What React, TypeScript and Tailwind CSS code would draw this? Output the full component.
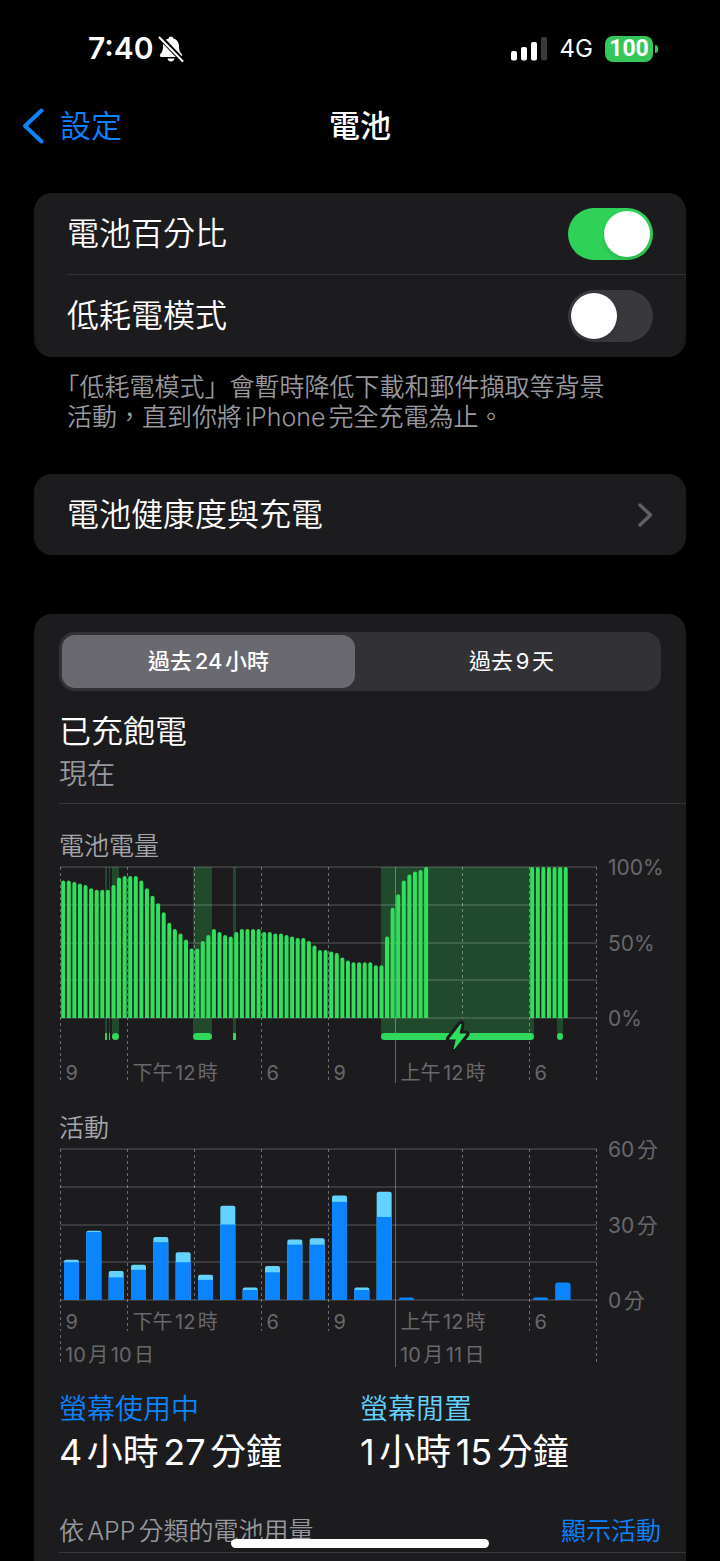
import React, { useState } from 'react';

const battery: (number | null)[] = [
  91, 91, 90, 89, 88, 86, 85, 85, 85, 88, 93, 94, 94, 94, 91, 86, 81, 76, 70, 63, 59, 56, 52, 46, 46, 51, 55, 59, 57,
  55, 54, 57, 59, 59, 59, 59, 57, 57, 56, 56, 55, 54, 53, 53, 51, 48, 45, 45, 44, 43, 40, 38, 37, 37, 37, 37, 35, 35,
  54, 73, 82, 91, 95, 97, 98, 100,
  ...Array(18).fill(null),
  100, 100, 100, 100, 100, 100, 100,
];

// [start, end] of each charging period, in chart units
const charging = [
  [46, 48],
  [50, 51],
  [53, 60],
  [134, 153],
  [174, 177],
  [322, 475],
  [498, 504],
];

// [hour slot, screen on minutes, screen idle minutes]
const activity = [
  [0, 15, 1],
  [1, 27, 0.5],
  [2, 9, 2.5],
  [3, 12, 2],
  [4, 23, 2],
  [5, 15, 4],
  [6, 8, 2],
  [7, 30, 7.5],
  [8, 4, 1],
  [9, 11, 2.5],
  [10, 22, 2],
  [11, 22, 2.5],
  [12, 39, 2.5],
  [13, 4, 1],
  [14, 33, 10],
  [15, 1, 0],
  [21, 1, 0],
  [22, 7, 0],
];

const hours = ['9', '下午12時', '', '6', '9', '上午12時', '', '6', ''];

const TOP = 8;
const PLOT = 151;
const STEP = 67;

function Grid({ labels, labelY, lineEnd }: { labels: string[]; labelY: number; lineEnd: number }) {
  return (
    <g>
      {[0, 1, 2, 3, 4].map((i) => {
        const y = TOP + Math.round((PLOT * i) / 4);
        return <line key={i} x1={1} x2={538} y1={y} y2={y} stroke="#ffffff" strokeOpacity={0.27} strokeWidth={1.2} />;
      })}
      {hours.map((hour, i) => {
        const x = 1.5 + STEP * i;
        const end = hour || i === 8 ? lineEnd : TOP + PLOT;
        return (
          <g key={i}>
            {i === 5 ? (
              <line x1={x} x2={x} y1={TOP} y2={lineEnd} stroke="#ffffff" strokeOpacity={0.32} />
            ) : (
              <line x1={x} x2={x} y1={TOP} y2={end} stroke="#ffffff" strokeOpacity={0.36} strokeDasharray="3 3" />
            )}
            <text x={x + 5} y={labelY} fontSize={20} fill="#68686d">
              {hour}
            </text>
          </g>
        );
      })}
      {labels.map((label, i) => (
        <text key={label} x={549} y={TOP + (PLOT * i) / 2 + 8} fontSize={21} fill="#68686d">
          {label}
        </text>
      ))}
    </g>
  );
}

function BatteryChart() {
  return (
    <svg viewBox="0 0 602 224" className="block w-full overflow-visible font-normal" role="img" aria-label="電池電量">
      {charging.map(([start, end]) => (
        <rect key={start} x={start} y={TOP} width={end - start} height={170} fill="#214a2c" />
      ))}
      <Grid labels={['100%', '50%', '0%']} labelY={221} lineEnd={224} />
      {battery.map((level, i) => {
        if (level === null) return null;
        const height = (PLOT * level) / 100;
        const x = 2.2 + (STEP / 12) * i;
        const y = TOP + PLOT - height;
        return <path key={i} d={`M${x} ${y + height}V${y + 2}q0-2 2-2t2 2V${y + height}z`} fill="#30e05c" />;
      })}
      {charging.map(([start, end]) => (
        <rect key={start} x={start} y={174} width={end - start} height={7} rx={end - start > 4 ? 3.5 : 0.5} fill="#30d95b" />
      ))}
      <path d="M402 165L390.500 180h7L395 190L407 175h-7z" fill="none" stroke="#1c1c1e" strokeWidth={7} strokeLinejoin="round" />
      <path d="M402 165L390.500 180h7L395 190L407 175h-7z" fill="#30e05c" stroke="#30e05c" strokeLinejoin="round" />
    </svg>
  );
}

function ActivityChart() {
  const scale = PLOT / 60;
  return (
    <svg viewBox="0 0 602 226" className="block w-full overflow-visible font-normal" role="img" aria-label="活動">
      <Grid labels={['60分', '30分', '0分']} labelY={188} lineEnd={190} />
      {[0, 8].map((i) => (
        <line key={i} x1={1.5 + STEP * i} x2={1.5 + STEP * i} y1={194} y2={224} stroke="#ffffff" strokeOpacity={0.36} strokeDasharray="3 3" />
      ))}
      <line x1={336.5} x2={336.5} y1={190} y2={226} stroke="#ffffff" strokeOpacity={0.32} />
      <text x={6} y={221} fontSize={20} fill="#68686d">10月10日</text>
      <text x={341} y={221} fontSize={20} fill="#68686d">10月11日</text>
      {activity.map(([slot, on, idle]) => {
        const x = 5 + (STEP / 3) * slot;
        const base = TOP + PLOT;
        const onTop = base - on * scale;
        const top = onTop - idle * scale;
        const r = Math.min(2, base - top);
        return (
          <g key={slot}>
            <path d={`M${x} ${base}V${top + r}q0-${r} ${r}-${r}h${15 - 2 * r}q${r} 0 ${r} ${r}V${base}z`} fill={idle ? '#64d2ff' : '#0a84ff'} />
            <rect x={x} y={idle ? onTop : top + r} width={15} height={base - (idle ? onTop : top + r)} fill="#0a84ff" />
          </g>
        );
      })}
    </svg>
  );
}

function StatusBar() {
  return (
    <div className="flex h-[98px] items-center justify-between pr-[62px] pl-[88px]">
      <div className="flex items-center gap-1">
        <span className="text-[30px] font-semibold">7:40</span>
        <svg viewBox="0 0 26 26" className="size-[26px]" aria-label="靜音">
          <path d="M13 0.500c-1.300 0-2.200.8-2.400 2C6.800 3.500 5 6.500 5 10.500c0 4-.8 5.600-2.400 7.300C1.300 19.200 1.700 21 3.500 21h19c1.800 0 2.200-1.800.9-3.200C21.800 16.100 21 14.500 21 10.500c0-4-1.800-7-5.600-8-.2-1.200-1.100-2-2.400-2z" fill="#fff" />
          <path d="M9.500 22.500h7c-.4 1.800-1.700 3-3.500 3s-3.100-1.200-3.500-3z" fill="#fff" />
          <path d="M2 1L25 25" stroke="#000" strokeWidth="5" />
          <path d="M1.500 1.500L24.500 25" stroke="#fff" strokeWidth="2" strokeLinecap="round" />
        </svg>
      </div>
      <div className="flex items-center gap-3">
        <svg viewBox="0 0 37 24" className="h-6 w-[37px]" aria-label="訊號">
          <rect x="0" y="14" width="6" height="9.500" rx="2" fill="#fff" />
          <rect x="10" y="10" width="6" height="13.500" rx="2" fill="#fff" />
          <rect x="20" y="5" width="6" height="18.500" rx="2" fill="#fff" />
          <rect x="30" y="0" width="6" height="23.500" rx="2" fill="#3a3a3c" />
        </svg>
        <span className="text-[24px] font-normal">4G</span>
        <div className="flex items-center gap-0.5">
          <span className="flex h-[26px] w-[48px] items-center justify-center rounded-lg bg-[#34c759] font-[Roboto,sans-serif] text-[23px] font-bold">
            100
          </span>
          <span className="h-2 w-[3px] rounded-r-full bg-[#34c759]" />
        </div>
      </div>
    </div>
  );
}

function ToggleRow({ label, defaultChecked = false }: { label: string; defaultChecked?: boolean }) {
  return (
    <label className="flex h-[82px] items-center justify-between pr-[33px] text-[32px]">
      {label}
      <input type="checkbox" role="switch" defaultChecked={defaultChecked} className="peer sr-only" />
      <span className="flex h-[52px] w-[85px] items-center rounded-full bg-[#39393d] p-[3px] peer-checked:justify-end peer-checked:bg-[#30d158]">
        <span className="size-[46px] rounded-full bg-white shadow-md" />
      </span>
    </label>
  );
}

export default function App() {
  const [range, setRange] = useState(0);

  return (
    <div
      lang="zh-Hant"
      className="min-h-screen overflow-hidden bg-black font-['Inter','Noto_Sans_CJK_TC',sans-serif] leading-tight font-[350] text-white [text-autospace:normal]"
    >
      <StatusBar />

      <header className="grid h-14 grid-cols-3 items-center px-[22px] text-[31px]">
        <a href="#settings" className="flex items-center gap-4 text-[#0a84ff]">
          <svg viewBox="0 0 22 36" className="h-9 w-[22px]" fill="none" aria-hidden="true">
            <path d="M19.500 2.500L3 18l16.500 15.500" stroke="currentColor" strokeWidth="4" strokeLinecap="round" strokeLinejoin="round" />
          </svg>
          設定
        </a>
        <h1 className="text-center font-medium">電池</h1>
      </header>

      <main className="px-[34px] pt-[39px]">
        <section className="divide-y divide-[#323234] rounded-[18px] bg-[#1c1c1e] pl-[33px]">
          <ToggleRow label="電池百分比" defaultChecked />
          <ToggleRow label="低耗電模式" />
        </section>
        <p className="mt-[15px] px-[33px] text-[25px] leading-[30px] text-[#98989f]">
          <span className="[font-feature-settings:'halt']">「</span>低耗電模式」會暫時降低下載和郵件擷取等背景
          <br />
          活動，直到你將iPhone完全充電為止。
        </p>

        <a href="#health" className="mt-[42px] flex h-[81px] items-center justify-between rounded-[18px] bg-[#1c1c1e] px-[33px] text-[32px]">
          電池健康度與充電
          <svg viewBox="0 0 16 24" className="h-6 w-4" fill="none" aria-hidden="true">
            <path d="M3 2l10.500 10L3 22" stroke="#5f5f64" strokeWidth="3.500" strokeLinecap="round" strokeLinejoin="round" />
          </svg>
        </a>

        <section className="mt-[59px] rounded-t-[18px] bg-[#1c1c1e] pt-[18px] pb-2 pl-[25px]">
          <div className="mr-[25px] flex h-[59px] gap-2.5 rounded-2xl bg-[#323236] p-[3px] text-[22px]">
            {['過去24小時', '過去9天'].map((label, i) => (
              <button
                key={label}
                aria-pressed={range === i}
                onClick={() => setRange(i)}
                className={`flex-1 rounded-[13px] ${range === i ? 'bg-[#6a696f] font-medium' : 'font-normal'}`}
              >
                {label}
              </button>
            ))}
          </div>

          <div className="border-b border-[#38383a] pt-[19px] pb-[9px]">
            <h2 className="text-[32px] leading-[44px]">已充飽電</h2>
            <p className="text-[28px] leading-10 text-[#98989f]">現在</p>
          </div>

          <div className="pr-[25px]">
            <h3 className="pt-[29px] text-[25px] leading-[26px] text-[#a5a5ac]">電池電量</h3>
            <BatteryChart />
            <h3 className="pt-8 text-[25px] leading-[26px] text-[#a5a5ac]">活動</h3>
            <ActivityChart />

            <div className="grid grid-cols-2 pt-[22px]">
              <div>
                <p className="text-[28px] leading-10 text-[#0a84ff]">螢幕使用中</p>
                <p className="text-[36px] leading-[46px] font-normal">4小時27分鐘</p>
              </div>
              <div>
                <p className="text-[28px] leading-10 text-[#64d2ff]">螢幕閒置</p>
                <p className="text-[36px] leading-[46px] font-normal">1小時15分鐘</p>
              </div>
            </div>
          </div>

          <div className="mt-[39px] flex justify-between border-b border-[#38383a] pr-[25px] pb-1 text-[25px] leading-[34px]">
            <h3 className="text-[#98989f]">依APP分類的電池用量</h3>
            <button className="text-[#0a84ff]">顯示活動</button>
          </div>
        </section>
      </main>

      <div className="fixed bottom-[13px] left-1/2 h-[9px] w-[258px] -translate-x-1/2 rounded-full bg-white" />
    </div>
  );
}
